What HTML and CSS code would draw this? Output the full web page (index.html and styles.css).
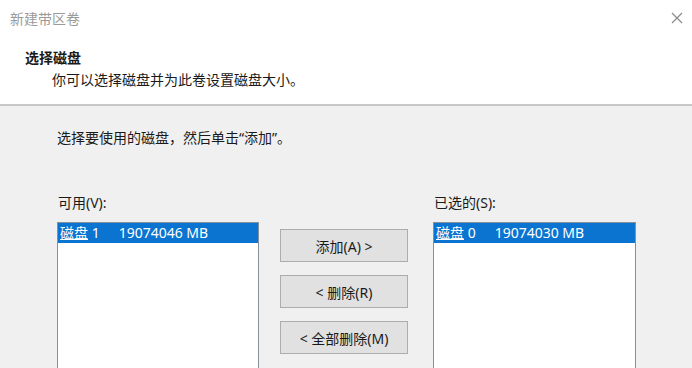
FILE: index.html
```html
<!DOCTYPE html>
<html lang="zh-CN">
<head>
    <meta charset="utf-8">
    <title>新建带区卷</title>
    <link rel="stylesheet" href="styles.css">
</head>
<body>
    <div class="wizard">
        <div class="top">
            <div class="titlebar">
                <span class="title">新建带区卷</span>
                <span class="close">
                    <svg width="12" height="12" viewBox="0 0 12 12"><path d="M1 1L11 11M11 1L1 11" stroke="#8a8a8a" stroke-width="1.2" fill="none"/></svg>
                </span>
            </div>
            <div class="header">
                <h2 class="heading">选择磁盘</h2>
                <p class="subheading">你可以选择磁盘并为此卷设置磁盘大小。</p>
            </div>
        </div>
        <div class="content">
            <p class="intro">选择要使用的磁盘，然后单击“添加”。</p>
            <div class="picker">
                <label class="label">可用(V):</label>
                <span></span>
                <label class="label">已选的(S):</label>

                <div class="listbox">
                    <div class="item selected"><u>磁盘</u> 1<span class="size">19074046 MB</span></div>
                </div>
                <div class="buttons">
                    <button class="button">添加(A) &gt;</button>
                    <button class="button">&lt; 删除(R)</button>
                    <button class="button">&lt; 全部删除(M)</button>
                </div>
                <div class="listbox">
                    <div class="item selected"><u>磁盘</u> 0<span class="size">19074030 MB</span></div>
                </div>
            </div>
        </div>
    </div>
</body>
</html>
```

FILE: styles.css
```css
    body {
        margin: 0;
        width: 692px;
        height: 368px;
        overflow: hidden;
        background: #f0f0f0;
        font-family: "Noto Sans", "Noto Sans CJK SC", sans-serif;
        font-size: 14px;
        color: #1a1a1a;
    }
    .top {
        background: #ffffff;
        border-bottom: 2px solid #c8c8c8;
        height: 104px;
    }
    .titlebar {
        display: flex;
        justify-content: space-between;
        align-items: center;
        height: 36px;
        padding-left: 10px;
        padding-right: 9px;
    }
    .title {
        color: #9a9a9a;
        font-size: 14px;
    }
    .close {
        display: flex;
        width: 12px;
        height: 12px;
    }
    .header {
        padding: 12px 0 0 25px;
    }
    .heading {
        margin: 0;
        font-size: 14px;
        font-weight: bold;
        line-height: 20px;
    }
    .subheading {
        margin: 2px 0 0 27px;
        line-height: 20px;
    }
    .content {
        padding: 22px 0 0 57px;
    }
    .intro {
        margin: 0;
        line-height: 20px;
    }
    .picker {
        display: grid;
        grid-template-columns: 202px 174px 203px;
        grid-template-rows: 20px auto;
        row-gap: 9px;
        margin-top: 45px;
    }
    .label {
        line-height: 20px;
        padding-left: 1px;
    }
    .listbox {
        height: 160px;
        background: #ffffff;
        border: 1px solid #8a9099;
    }
    .item {
        height: 20px;
        line-height: 20px;
        padding-left: 2px;
        white-space: nowrap;
    }
    .selected {
        background: #0a74d0;
        color: #ffffff;
    }
    .size {
        margin-left: 19px;
    }
    .buttons {
        display: flex;
        flex-direction: column;
        gap: 13px;
        padding: 7px 25px 0 21px;
    }
    .button {
        height: 33px;
        background: #e1e1e1;
        border: 1px solid #adadad;
        font-family: inherit;
        font-size: 14px;
        color: #1a1a1a;
        padding: 0;
    }
```
